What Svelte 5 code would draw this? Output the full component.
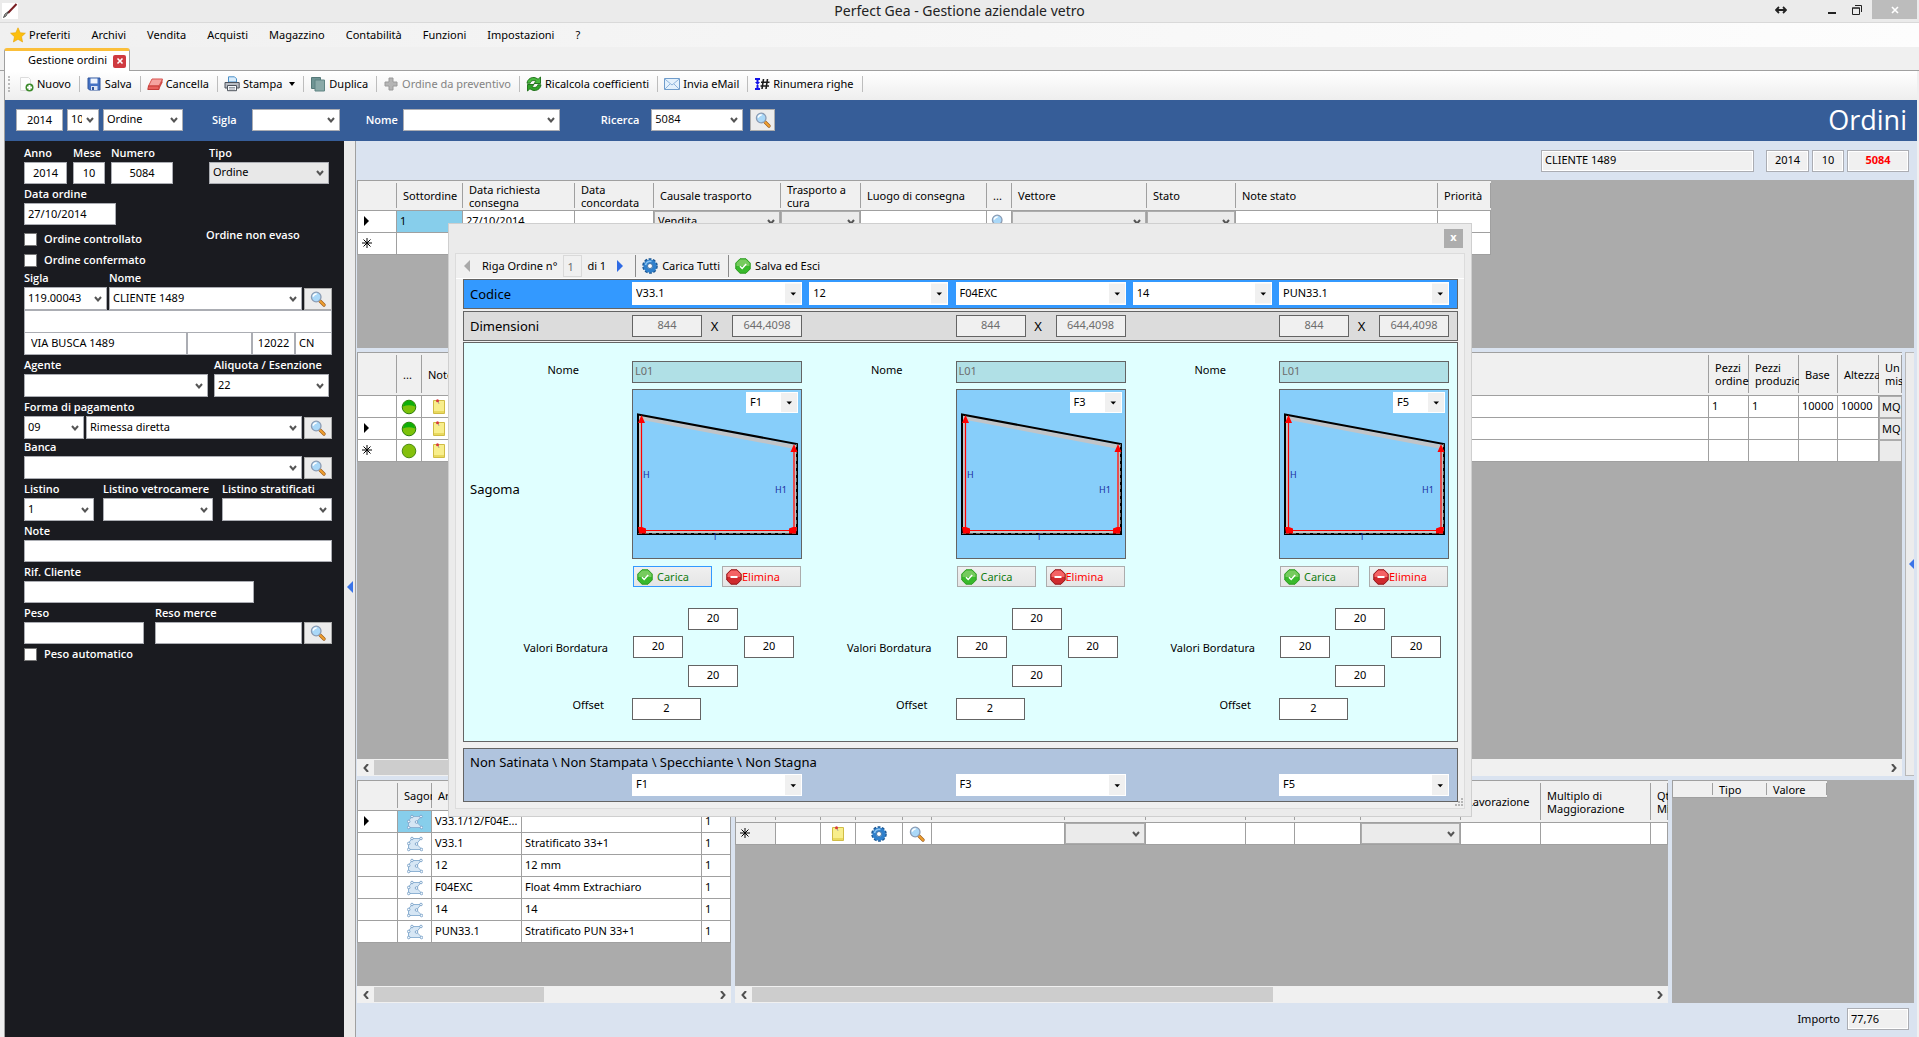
<script>
  const menus = ['Archivi', 'Vendita', 'Acquisti', 'Magazzino', 'Contabilità', 'Funzioni', 'Impostazioni', '?'];
  const tools = [
    { icon: 'new', text: 'Nuovo' },
    { icon: 'save', text: 'Salva' },
    { icon: 'erase', text: 'Cancella' },
    { icon: 'print', text: 'Stampa', drop: true },
    { icon: 'copy', text: 'Duplica' },
    { icon: 'plus', text: 'Ordine da preventivo', off: true },
    { icon: 'refresh', text: 'Ricalcola coefficienti' },
    { icon: 'mail', text: 'Invia eMail' },
    { icon: 'renumber', text: 'Rinumera righe' }
  ];
  const orderCols = [
    { w: 39, t: '' }, { w: 66, t: 'Sottordine' }, { w: 112, t: 'Data richiesta consegna' }, { w: 79, t: 'Data concordata' },
    { w: 127, t: 'Causale trasporto' }, { w: 80, t: 'Trasporto a cura' }, { w: 126, t: 'Luogo di consegna' }, { w: 25, t: '...' },
    { w: 135, t: 'Vettore' }, { w: 89, t: 'Stato' }, { w: 202, t: 'Note stato' }, { w: 53, t: 'Priorità' }
  ];
  const lineCols = [
    { w: 39, t: '' }, { w: 25, t: '...' }, { w: 35, t: 'Note' }, { w: 0, t: '' }, { w: 40, t: 'Pezzi ordine' },
    { w: 50, t: 'Pezzi produzione' }, { w: 39, t: 'Base' }, { w: 41, t: 'Altezza' }, { w: 23, t: 'Un mis' }
  ];
  const lines = [
    { mark: '', lit: true, v: ['1', '1', '10000', '10000'], um: 'MQ' },
    { mark: 'arrow', lit: true, v: ['', '', '', ''], um: 'MQ' },
    { mark: 'star', lit: false, v: ['', '', '', ''], um: '' }
  ];
  const partCols = [{ w: 40, t: '' }, { w: 34, t: 'Sagoma' }, { w: 90, t: 'Articolo' }, { w: 180, t: 'Descrizione' }, { w: 29, t: '' }];
  const parts = [
    ['V33.1/12/F04E...', ''], ['V33.1', 'Stratificato 33+1'], ['12', '12 mm'],
    ['F04EXC', 'Float 4mm Extrachiaro'], ['14', '14'], ['PUN33.1', 'Stratificato PUN 33+1']
  ];
  const workCols = [
    { w: 40, t: '' }, { w: 45, t: '' }, { w: 35, t: '' }, { w: 47, t: '' }, { w: 29, t: '' }, { w: 133, t: '' }, { w: 81, t: '' },
    { w: 100, t: '' }, { w: 49, t: '' }, { w: 66, t: '' }, { w: 100, t: '' }, { w: 80, t: 'Lavorazione' },
    { w: 110, t: 'Multiplo di Maggiorazione' }, { w: 0, t: 'Qtà Min' }
  ];
  const faces = ['F1', 'F3', 'F5'];
</script>

{#snippet icon(name)}
  <svg class="ico" viewBox="0 0 16 16" aria-hidden="true">
    {#if name === 'star'}
      <path d="M8 .8l2.200 4.900 5.200.5-3.900 3.500 1.100 5.300L8 12.300 3.400 15l1.100-5.300L.6 6.200l5.200-.5z" fill="#fcbf0e" stroke="#e8a200" stroke-width=".6" />
    {:else if name === 'new'}
      <path d="M2.500 1.500h8l2 2v11h-10z" fill="#fdfdfd" stroke="#dcdcdc" />
      <circle cx="11.500" cy="11.500" r="4" fill="#3d8b2c" />
      <path d="M11.500 9v5M9 11.500h5" stroke="#fff" stroke-width="2" />
    {:else if name === 'save'}
      <path d="M2 2h12v12H3.500L2 12.500z" fill="#4472c4" stroke="#2f549b" />
      <path d="M4.500 2.500h7v5h-7z" fill="#eef4fd" />
      <path d="M5 10h6.500v4H5z" fill="#dbe4f4" />
      <path d="M6 11h2v3H6z" fill="#2f549b" />
    {:else if name === 'erase'}
      <path d="M5 3h10.500l-3.500 7H1.500z" fill="#f5a3a0" stroke="#d9534f" />
      <path d="M1.500 10H12v3.500H.8z" fill="#e8605c" stroke="#c43c39" />
      <path d="M12 10l3.500-7v3.500L12 13.500z" fill="#cf4743" />
    {:else if name === 'print'}
      <path d="M4.500 6V.8h6l2 2V6z" fill="#d9ecfb" stroke="#4a90c8" />
      <path d="M1 6.500h14.200v5.500H1z" fill="#b9bdc4" stroke="#4d535c" />
      <path d="M3.500 9.500h9v5.200h-9z" fill="#f7f9fb" stroke="#4d535c" />
      <path d="M5 11.500h6M5 13h6" stroke="#7d8792" stroke-width=".8" />
    {:else if name === 'copy'}
      <path d="M1.500 1.500h9v11h-9z" fill="#6f9494" stroke="#557878" />
      <path d="M5 4h9.500v11H5z" fill="#8aa9a8" stroke="#5f8483" />
    {:else if name === 'plus'}
      <path d="M6 2h4v4h4v4h-4v4H6v-4H2V6h4z" fill="#b5b5b5" stroke="#9a9a9a" />
    {:else if name === 'refresh'}
      <path d="M1 7.200C1.500 3 5.500.6 9.500 1.800l2.600 1.400L14.500 1v6.500H8l2-2.200C7.500 3.800 4.800 4.600 4.200 7.200z" fill="#49b83f" stroke="#176b12" stroke-width=".9" />
      <path d="M15 8.800c-.5 4.200-4.500 6.600-8.500 5.400l-2.600-1.400L1.500 15V8.500H8l-2 2.200c2.500 1.500 5.200.7 5.800-1.900z" fill="#2fa327" stroke="#176b12" stroke-width=".9" />
    {:else if name === 'mail'}
      <path d="M.5 2.500h15v11H.5z" fill="#e4f1fc" stroke="#6f9ccb" />
      <path d="M.8 3l7.200 6 7.200-6M1 13l5-5M15 13l-5-5" fill="none" stroke="#8fb4dc" />
    {:else if name === 'renumber'}
      <path d="M1 2h5v2H4.500v2H6L3.500 9 1 6h1.500V4H1zM1 12h5v2H1zM2.500 9h2v3h-2z" fill="#1212e8" />
      <path d="M9.500 3l-1.500 10M13.500 3L12 13M7 6.300h8.500M6.500 10h8.500" stroke="#1d1d1d" stroke-width="1.600" />
    {:else if name === 'find'}
      <path d="M9.500 9.500l4.500 4.500" stroke="#9a5a1a" stroke-width="3.200" stroke-linecap="round" />
      <path d="M10 10l4 4" stroke="#f0a030" stroke-width="2" stroke-linecap="round" />
      <circle cx="6.200" cy="6" r="4.800" fill="#aad8f8" stroke="#8b9cb4" stroke-width="1.300" />
      <path d="M3.200 5.600a3 3 0 0 1 3.500-2.500" stroke="#fff" stroke-width="1.500" fill="none" />
    {:else if name === 'gear'}
      <circle cx="8" cy="8" r="6.300" fill="none" stroke="#1c5793" stroke-width="3" stroke-dasharray="2.600 1.350" />
      <circle cx="8" cy="8" r="4.600" fill="none" stroke="#2f80cc" stroke-width="4" />
      <path d="M3.500 7a4.600 4.600 0 0 1 6-3.500" fill="none" stroke="#8cc4f2" stroke-width="1.500" />
      <circle cx="8" cy="8" r="2.500" fill="#fff" stroke="#1c5793" stroke-width=".8" />
    {:else if name === 'ok'}
      <path d="M5 .8h6L15.200 5v6L11 15.200H5L.8 11V5z" fill="#39b92c" stroke="#2a9a1e" />
      <path d="M5.200 1.500h5.600L14.500 5v3h-13V5z" fill="#86cf6c" opacity=".8" />
      <path d="M5 8.200l2.200 2.300 4-4.500" fill="none" stroke="#fff" stroke-width="1.500" />
    {:else if name === 'stop'}
      <path d="M5 .8h6L15.200 5v6L11 15.200H5L.8 11V5z" fill="#cf2a2e" stroke="#8e1115" />
      <path d="M5.200 1.500h5.600L14.500 5v3h-13V5z" fill="#f7696b" opacity=".9" />
      <path d="M4.500 8h7" stroke="#fff" stroke-width="2" />
    {:else if name === 'lit'}
      <circle cx="8" cy="8" r="6.800" fill="#7cc20a" stroke="#2b7d0b" />
      <path d="M2 7.500a6 6 0 0 1 12 0q-6-2.500-12 0z" fill="#0fae0a" />
    {:else if name === 'ball'}
      <circle cx="8" cy="8" r="6.800" fill="#84c00c" stroke="#4c8a12" />
    {:else if name === 'note'}
      <path d="M2.500 1.500h11v13h-11z" fill="#f8ee8c" stroke="#d0bc45" />
      <path d="M3 12h10v2H3z" fill="#e9d95e" />
      <path d="M7 2l1 3" stroke="#999" stroke-width=".8" />
      <circle cx="6.500" cy="1.700" r="1.500" fill="#d9383c" />
    {:else if name === 'shape'}
      <path d="M5 2.500h9L9.500 8l5.500 5.500H1.500V7z" fill="#d6e6f4" stroke="#8fb3d4" />
      <g fill="#f4f9fd" stroke="#6d98c2" stroke-width=".8">
        <circle cx="5" cy="2.500" r="1.300" /><circle cx="14" cy="2.500" r="1.300" /><circle cx="9.500" cy="8" r="1.300" />
        <circle cx="14.500" cy="13.500" r="1.300" /><circle cx="1.700" cy="13.500" r="1.300" /><circle cx="1.700" cy="7.500" r="1.300" />
      </g>
    {:else if name === 'arrow'}
      <path d="M5 3l5 5-5 5z" fill="#000" />
    {:else if name === 'mark'}
      <path d="M8 3v10M3 8h10M4.500 4.500l7 7M11.500 4.500l-7 7" stroke="#000" />
    {/if}
  </svg>
{/snippet}

{#snippet combo(value, cls, label)}
  <select class="box combo {cls}" aria-label={label}><option>{value}</option></select>
{/snippet}

{#snippet cols(list)}
  <colgroup>
    {#each list as c}<col style={c.w ? `width:${c.w}px` : ''} />{/each}
  </colgroup>
{/snippet}

{#snippet head(list)}
  <thead>
    <tr>{#each list as c}<th scope="col">{c.t}</th>{/each}</tr>
  </thead>
{/snippet}

{#snippet hscroll(cls)}
  <div class="hscroll">
    <button aria-label="Scorri a sinistra"><svg viewBox="0 0 8 8"><path d="M6 0L2.500 4 6 8" /></svg></button>
    <div class="track"><div class="thumb {cls}"></div></div>
    <button aria-label="Scorri a destra"><svg viewBox="0 0 8 8"><path d="M2 0l3.500 4L2 8" /></svg></button>
  </div>
{/snippet}

<div class="app">
  <header class="titlebar">
    <svg class="brush" viewBox="0 0 16 16" aria-hidden="true">
      <path d="M0 0h16v16H0z" fill="#fff" />
      <path d="M14.500 1L6 10" stroke="#7a1f24" stroke-width="2" />
      <path d="M6.500 8.500L4 13l-2.500 1.500L3 11z" fill="#b8b8b0" stroke="#333" stroke-width=".8" />
    </svg>
    <h1>Perfect Gea - Gestione aziendale vetro</h1>
    <div class="winbtns">
      <button class="swap" aria-label="Sposta"><svg viewBox="0 0 12 8"><path d="M1 4h10M4 1L1 4l3 3M8 1l3 3-3 3" fill="none" stroke="#222" stroke-width="1.800" /></svg></button>
      <button class="min" aria-label="Riduci"><svg viewBox="0 0 10 10"><path d="M1 8h8" stroke="#222" stroke-width="2" /></svg></button>
      <button class="restore" aria-label="Ripristina"><svg viewBox="0 0 12 12"><path d="M1.500 4h7v6.500h-7zM1 4h8M4 1.500h6.500V8" fill="none" stroke="#222" /></svg></button>
      <button class="close" aria-label="Chiudi"><svg viewBox="0 0 10 10"><path d="M2 2l6 6M8 2L2 8" stroke="#fff" stroke-width="1.600" /></svg></button>
    </div>
  </header>

  <nav class="menubar">
    <button class="fav">{@render icon('star')}Preferiti</button>
    {#each menus as m}<button>{m}</button>{/each}
  </nav>

  <div class="tabs">
    <div class="tab">
      <span>Gestione ordini</span>
      <button aria-label="Chiudi scheda"><svg viewBox="0 0 10 10"><path d="M2.500 2.500l5 5M7.500 2.500l-5 5" stroke="#fff" stroke-width="1.600" /></svg></button>
    </div>
  </div>

  <div class="work">
    <div class="toolbar">
      <span class="grip"></span>
      {#each tools as t}
        <button class:drop={t.drop} disabled={t.off}>{@render icon(t.icon)}<span>{t.text}</span></button>
      {/each}
    </div>

    <div class="band">
      <input class="box mid w47" value="2014" aria-label="Anno ricerca" />
      {@render combo('10', 'w32', 'Mese ricerca')}
      {@render combo('Ordine', 'w80', 'Tipo ricerca')}
      <label class="sig">Sigla<select class="box combo w88"><option></option></select></label>
      <label class="nom">Nome<select class="box combo w157"><option></option></select></label>
      <label class="ric">Ricerca<select class="box combo w92"><option>5084</option></select></label>
      <button class="find" aria-label="Cerca">{@render icon('find')}</button>
      <h2>Ordini</h2>
    </div>

    <div class="body">
      <aside>
        <div class="row first">
          <label class="w43">Anno<input class="box mid" value="2014" /></label>
          <label class="w32">Mese<input class="box mid" value="10" /></label>
          <label class="w62">Numero<input class="box mid" value="5084" /></label>
          <label class="w120 end">Tipo<select class="box combo grey"><option>Ordine</option></select></label>
        </div>
        <div class="row"><label class="w92">Data ordine<input class="box" value="27/10/2014" /></label></div>
        <div class="state">
          <div class="ticks">
            <label class="tick"><input type="checkbox" />Ordine controllato</label>
            <label class="tick"><input type="checkbox" />Ordine confermato</label>
          </div>
          <span>Ordine non evaso</span>
        </div>
        <div class="row tight">
          <label class="w83">Sigla<select class="box combo tall"><option>119.00043</option></select></label>
          <label class="grow">Nome<select class="box combo tall"><option>CLIENTE 1489</option></select></label>
          <button class="find" aria-label="Cerca cliente">{@render icon('find')}</button>
        </div>
        <div class="address">
          <input class="box all" aria-label="Ragione sociale" />
          <input class="box street" value="VIA BUSCA 1489" aria-label="Indirizzo" />
          <input class="box" aria-label="Località" />
          <input class="box mid" value="12022" aria-label="CAP" />
          <input class="box" value="CN" aria-label="Provincia" />
        </div>
        <div class="row">
          <label class="w184">Agente<select class="box combo tall"><option></option></select></label>
          <label class="w115">Aliquota / Esenzione<select class="box combo tall"><option>22</option></select></label>
        </div>
        <div class="row tight">
          <label class="w60">Forma di pagamento<select class="box combo tall"><option>09</option></select></label>
          <label class="grow">&nbsp;<select class="box combo tall" aria-label="Descrizione pagamento"><option>Rimessa diretta</option></select></label>
          <button class="find" aria-label="Cerca pagamento">{@render icon('find')}</button>
        </div>
        <div class="row tight bank">
          <label class="grow">Banca<select class="box combo tall"><option></option></select></label>
          <button class="find" aria-label="Cerca banca">{@render icon('find')}</button>
        </div>
        <div class="row lists">
          <label class="w70">Listino<select class="box combo tall"><option>1</option></select></label>
          <label class="w110">Listino vetrocamere<select class="box combo tall"><option></option></select></label>
          <label class="w110">Listino stratificati<select class="box combo tall"><option></option></select></label>
        </div>
        <div class="row"><label class="grow">Note<input class="box" /></label></div>
        <div class="row"><label class="w230">Rif. Cliente<input class="box" /></label></div>
        <div class="row tight">
          <label class="w120 peso">Peso<input class="box" /></label>
          <label class="grow">Reso merce<input class="box" /></label>
          <button class="find" aria-label="Cerca reso">{@render icon('find')}</button>
        </div>
        <label class="tick"><input type="checkbox" />Peso automatico</label>
      </aside>

      <div class="splitter"><svg viewBox="0 0 6 12"><path d="M6 0v12L0 6z" fill="#3a74e8" /></svg></div>

      <main>
        <div class="strip">
          <input class="box ro w213" value="CLIENTE 1489" readonly aria-label="Cliente" />
          <input class="box ro mid w43" value="2014" readonly aria-label="Anno" />
          <input class="box ro mid w32" value="10" readonly aria-label="Mese" />
          <input class="box ro mid num w62" value="5084" readonly aria-label="Numero" />
        </div>

        <section class="pane orders">
          <table class="h30">
            {@render cols(orderCols)}
            {@render head(orderCols)}
            <tbody>
              <tr>
                <td class="mk">{@render icon('arrow')}</td><td class="sel">1</td><td>27/10/2014</td><td></td>
                <td class="cell">{@render combo('Vendita', 'grid', 'Causale')}</td><td class="cell">{@render combo('', 'grid', 'Trasporto')}</td>
                <td></td><td class="ic">{@render icon('find')}</td>
                <td class="cell">{@render combo('', 'grid', 'Vettore')}</td><td class="cell">{@render combo('', 'grid', 'Stato')}</td><td></td><td></td>
              </tr>
              <tr><td class="mk">{@render icon('mark')}</td>{#each orderCols.slice(1) as c}<td></td>{/each}</tr>
            </tbody>
          </table>
        </section>

        <div class="middle">
          <section class="pane">
            <table class="h43 full">
              {@render cols(lineCols)}
              {@render head(lineCols)}
              <tbody>
                {#each lines as l}
                  <tr>
                    <td class="mk">{#if l.mark}{@render icon(l.mark === 'star' ? 'mark' : 'arrow')}{/if}</td>
                    <td class="ic">{@render icon(l.lit ? 'lit' : 'ball')}</td>
                    <td class="ic">{@render icon('note')}</td>
                    <td></td>
                    {#each l.v as v}<td>{v}</td>{/each}
                    <td class="um">{l.um}</td>
                  </tr>
                {/each}
              </tbody>
            </table>
            {@render hscroll('t60')}
          </section>
          <div class="side"><svg viewBox="0 0 6 12"><path d="M6 0v12L0 6z" fill="#3a74e8" /></svg></div>
        </div>

        <div class="lower">
          <section class="pane parts">
            <table class="h30">
              {@render cols(partCols)}
              {@render head(partCols)}
              <tbody>
                {#each parts as p, i}
                  <tr>
                    <td class="mk">{#if i === 0}{@render icon('arrow')}{/if}</td>
                    <td class="ic" class:sel={i === 0}>{@render icon('shape')}</td>
                    <td>{p[0]}</td><td>{p[1]}</td><td>1</td>
                  </tr>
                {/each}
              </tbody>
            </table>
            {@render hscroll('t50')}
          </section>
          <section class="pane works">
            <table class="h42 full">
              {@render cols(workCols)}
              {@render head(workCols)}
              <tbody>
                <tr>
                  <td class="mk shade">{@render icon('mark')}</td><td></td><td class="ic">{@render icon('note')}</td>
                  <td class="ic">{@render icon('gear')}</td><td class="ic">{@render icon('find')}</td><td></td>
                  <td class="cell">{@render combo('', 'grid', 'Tipo lavorazione')}</td><td></td><td></td><td></td>
                  <td class="cell">{@render combo('', 'grid', 'Lavorazione')}</td><td></td><td></td><td></td>
                </tr>
              </tbody>
            </table>
            {@render hscroll('t58')}
          </section>
          <section class="pane values">
            <table class="h18">
              <colgroup><col class="c1" /><col class="c2" /><col class="c3" /></colgroup>
              <thead><tr><th></th><th scope="col">Tipo</th><th scope="col">Valore</th></tr></thead>
            </table>
          </section>
        </div>

        <footer><label>Importo<input class="box ro w62" value="77,76" readonly /></label></footer>
      </main>
    </div>
  </div>

  <div class="dialog" role="dialog" aria-label="Riga ordine">
    <div class="dtitle"><button aria-label="Chiudi finestra">x</button></div>
    <div class="dbody">
      <div class="dtools">
        <button class="nav" aria-label="Riga precedente"><svg viewBox="0 0 6 12"><path d="M6 0v12L0 6z" fill="#a9a9a9" /></svg></button>
        <label>Riga Ordine n°<input class="page" value="1" disabled /></label>
        <span class="of">di 1</span>
        <button class="nav" aria-label="Riga successiva"><svg viewBox="0 0 6 12"><path d="M0 0v12l6-6z" fill="#2f6be4" /></svg></button>
        <button class="act">{@render icon('gear')}Carica Tutti</button>
        <button class="act">{@render icon('ok')}Salva ed Esci</button>
      </div>

      <div class="panel code">
        <strong>Codice</strong>
        {@render combo('V33.1', 'flat', 'Codice vetro 1')}
        {@render combo('12', 'flat gapbox', 'Codice camera 1')}
        {@render combo('F04EXC', 'flat', 'Codice vetro 2')}
        {@render combo('14', 'flat gapbox', 'Codice camera 2')}
        {@render combo('PUN33.1', 'flat', 'Codice vetro 3')}
      </div>

      <div class="panel dims">
        <strong>Dimensioni</strong>
        {#each faces as f, i}
          <div class="dim" class:later={i > 0}>
            <input class="dbox off" value="844" disabled aria-label="Base {f}" />
            <span>X</span>
            <input class="dbox off" value="644,4098" disabled aria-label="Altezza {f}" />
          </div>
        {/each}
      </div>

      <div class="panel shape">
        <strong>Sagoma</strong>
        {#each faces as f, i}
          <label class="lb name k{i}" for="n{i}">Nome</label>
          <input class="dbox aqua off v{i}" id="n{i}" value="L01" disabled />
          <div class="draw v{i}">
            <svg viewBox="0 0 168 168" role="img" aria-label="Sagoma {f}">
              <path d="M7 27.500L162 57v85H7z" fill="none" stroke="#c0c4c8" stroke-width="4" />
              <path d="M5 24.500L164 54v90H5z" fill="none" stroke="#000" stroke-width="2" />
              <path d="M5 143.500h158.500V54" fill="none" stroke="#666" stroke-width="1" stroke-dasharray="4 3" />
              <path d="M8.500 28v112M161 57v83M9 140.500h152" fill="none" stroke="#f00" stroke-width="1.200" />
              <path d="M8.500 25l3.500 8H5zM161 54l3.500 8h-7zM5 137h4l4 1.500v5H6zM164 137h-4l-4 1.500v5h7z" fill="#f00" />
              <text x="10" y="88">H</text><text x="142" y="103">H1</text><text x="81" y="150">l</text>
            </svg>
            {@render combo(f, 'flat small', 'Faccia ' + f)}
          </div>
          <div class="btns v{i}">
            <button class:focus={i === 0}>{@render icon('ok')}<span class="go">Carica</span></button>
            <button>{@render icon('stop')}<span class="no">Elimina</span></button>
          </div>
          <span class="lb edge k{i}">Valori Bordatura</span>
          <div class="cross v{i}">
            {#each ['Alto', 'Sinistra', 'Destra', 'Basso'] as side}
              <input class="dbox" value="20" aria-label="{side} {f}" />
            {/each}
          </div>
          <label class="lb off-l k{i}" for="o{i}">Offset</label>
          <input class="dbox ofs v{i}" id="o{i}" value="2" />
        {/each}
      </div>

      <div class="panel side-sel">
        <strong>Non Satinata \ Non Stampata \ Specchiante \ Non Stagna</strong>
        {#each faces as f, i}
          {@render combo(f, 'flat v' + i, 'Lato ' + f)}
        {/each}
      </div>
      <svg class="sizer" viewBox="0 0 9 9" aria-hidden="true"><path d="M7 1h2M4 4h2M7 4h2M1 7h2M4 7h2M7 7h2" stroke="#b5b5b5" stroke-width="2" /></svg>
    </div>
  </div>
</div>

<style>
  :global(body) { background: #f0f0f0; }
  * { box-sizing: border-box; }
  .app {
    position: relative; display: flex; flex-direction: column; min-height: 100vh; overflow: hidden;
    font: 11px/16px "Noto Sans", "Open Sans", sans-serif; color: #000; background: #f0f0f0;
  }
  button, input, select { font: inherit; color: inherit; margin: 0; border-radius: 0; min-width: 0; }
  button { border: 0; background: none; padding: 0; }
  .ico { width: 16px; height: 16px; flex: none; display: block; }

  .box { height: 22px; width: 100%; padding: 0 3px 2px; border: 1px solid #abadb3; background: #fff; color: #000; font-weight: 400; display: block; }
  .mid { text-align: center; }
  .combo {
    appearance: none; padding-right: 16px;
    background: #fff url("data:image/svg+xml,%3Csvg xmlns='http://www.w3.org/2000/svg' viewBox='0 0 8 6'%3E%3Cpath d='M1 1l3 3.500 3-3.500' fill='none' stroke='%23555' stroke-width='2'/%3E%3C/svg%3E") no-repeat right 4px center / 8px 6px;
  }
  .tall { height: 23px; }
  .grey { background-color: #e8e8e8; }
  .flat {
    border: 1px solid #fff; height: 23px;
    background: url("data:image/svg+xml,%3Csvg xmlns='http://www.w3.org/2000/svg' viewBox='0 0 16 20'%3E%3Cpath d='M0 0h16v20H0z' fill='%23f0f0f0'/%3E%3Cpath d='M5.500 9h5.500l-2.750 3z' fill='%23000'/%3E%3C/svg%3E") no-repeat right center / 16px 21px, #fff;
  }
  .ro { background: #f0f0f0; box-shadow: inset 0 0 0 1px #fff; }
  .num { color: #f00; font-weight: 700; }
  .find { width: 28px; height: 22px; flex: none; display: grid; place-items: center; background: #ececec; border: 1px solid #acacac; }

  .w32 { width: 32px; } .w43 { width: 43px; } .w47 { width: 47px; } .w60 { width: 60px; } .w62 { width: 62px; }
  .w70 { width: 70px; } .w80 { width: 80px; } .w83 { width: 83px; } .w88 { width: 88px; } .w92 { width: 92px; }
  .w110 { width: 110px; } .w115 { width: 115px; } .w120 { width: 120px; } .w157 { width: 157px; } .w184 { width: 184px; }
  .w213 { width: 213px; } .w230 { width: 230px; }
  .grow { flex: 1; }

  .titlebar { display: flex; align-items: center; height: 23px; background: #ebebeb; border-bottom: 1px solid #d9d9d9; padding-left: 2px; }
  .brush { width: 16px; height: 16px; }
  .titlebar h1 { flex: 1; text-align: center; font-size: 14px; font-weight: 400; line-height: 22px; margin: 0 0 0 126px; color: #222; }
  .winbtns { display: flex; width: 142px; align-self: flex-start; align-items: center; margin-right: 2px; }
  .winbtns svg { display: block; }
  .swap svg { width: 12px; height: 8px; }
  .swap { margin-right: 40px; }
  .min { margin-right: 14px; }
  .min svg, .close svg { width: 10px; height: 10px; }
  .restore svg { width: 12px; height: 12px; }
  .close { margin-left: auto; width: 45px; height: 19px; background: #bcbcbc; display: grid; place-items: center; }

  .menubar { display: flex; gap: 21px; height: 24px; align-items: center; padding-left: 10px; background: linear-gradient(90deg, #f0f0f0, #fdfdfd); }
  .fav { display: flex; gap: 3px; }
  .tabs { height: 24px; padding-left: 4px; border-bottom: 1px solid #a0a0a0; display: flex; align-items: flex-end; }
  .tab { display: flex; align-items: center; justify-content: space-between; width: 126px; height: 23px; padding: 0 3px 0 23px; margin-bottom: -1px; background: #fff; border: 1px solid #a0a0a0; border-top: 3px solid #fbbf3a; border-bottom: 0; border-radius: 3px 3px 0 0; }
  .tab span { padding-bottom: 3px; }
  .tab button { width: 13px; height: 13px; background: #cf3a40; border-radius: 2px; display: grid; place-items: center; }
  .tab svg { width: 10px; height: 10px; }

  .work { flex: 1; display: flex; flex-direction: column; margin: 0 2px 0 4px; border-left: 1px solid #a0a0a0; }
  .toolbar { display: flex; align-items: center; height: 29px; background: linear-gradient(#fff, #eee); padding: 0 0 4px 3px; }
  .grip { width: 2px; height: 16px; margin-right: 2px; border-left: 2px dotted #bbb; }
  .toolbar button { display: flex; align-items: center; gap: 3px; padding: 0 8px 0 6px; border-right: 1px solid #bdbdbd; }
  .toolbar button:disabled { color: #838383; }
  .drop::after { content: ""; border: 3px solid transparent; border-top: 4px solid #000; border-bottom: 0; margin-left: 4px; }

  .band { display: flex; align-items: center; height: 41px; padding: 0 10px 1px 11px; background: #365d98; color: #fff; font-weight: 600; gap: 4px; }
  .band label { display: flex; align-items: center; font-family: "Open Sans", sans-serif; }
  .sig { gap: 15px; margin-left: 25px; }
  .nom { gap: 5px; margin-left: 22px; }
  .ric { gap: 12px; margin-left: 37px; }
  .band .find { width: 25px; margin-left: 3px; }
  .band h2 { margin: 0 0 0 auto; font-size: 27px; font-weight: 400; line-height: 38px; font-family: "Open Sans", sans-serif; }

  .body { flex: 1; display: grid; grid-template-columns: 339px 12px minmax(0, 1fr); }
  aside { background: #1a1b20; color: #fff; padding: 4px 12px 0 19px; display: flex; flex-direction: column; gap: 2px; font-weight: 600; font-family: "Open Sans", sans-serif; }
  .row { display: flex; align-items: flex-end; gap: 6px; }
  .row label { display: block; white-space: nowrap; }
  .row .box { margin-top: 1px; font-family: "Noto Sans", sans-serif; }
  .row .find { align-self: flex-end; }
  .end { margin-left: auto; margin-right: 3px; }
  .tight { gap: 2px; }
  .bank { margin-top: -2px; }
  .peso { margin-right: 9px; }
  .lists { justify-content: space-between; }
  .tick { display: flex; align-items: center; gap: 7px; }
  .tick input { appearance: none; width: 13px; height: 13px; background: #fff; border: 1px solid #777; }
  .state { display: flex; padding-top: 4px; }
  .ticks { width: 182px; display: flex; flex-direction: column; gap: 5px; }
  .state span { line-height: 8px; }
  .address { display: grid; grid-template-columns: 163px 65px 43px 1fr; margin: -2px 0 1px; }
  .address .all { grid-column: 1 / -1; }
  .address .box { margin-bottom: -1px; font-family: "Noto Sans", sans-serif; height: 23px; }
  .address .street { padding-left: 6px; }

  .splitter { display: grid; place-items: center; background: #ebebeb; border-right: 1px solid #a0a0a0; }
  .splitter svg { width: 6px; height: 12px; margin-bottom: 4px; }

  main { display: flex; flex-direction: column; gap: 4px; background: #dae3f0; padding: 0 3px 0 1px; min-width: 0; }
  .strip { display: flex; gap: 3px; justify-content: flex-end; align-items: center; height: 35px; padding: 4px 5px 0 0; }
  .strip .w213 { margin-right: 9px; }
  .pane { background: #ababab; overflow: hidden; display: flex; flex-direction: column; align-items: flex-start; min-width: 0; }
  .orders { height: 168px; }
  .middle { flex: 1; display: flex; gap: 3px; min-height: 424px; }
  .middle .pane { flex: 1; }
  .side { width: 9px; background: #ececec; border: 1px solid #b8b8b8; border-right: 0; display: flex; align-items: center; justify-content: flex-end; }
  .side svg { width: 5px; height: 10px; }
  .lower { display: grid; grid-template-columns: 374px minmax(0, 1fr) 242px; gap: 4px; height: 223px; }

  table { table-layout: fixed; width: 1px; border-spacing: 0; border-top: 1px solid #a0a0a0; border-left: 1px solid #a0a0a0; }
  table.full { width: 100%; }
  th { background: linear-gradient(#a0a0a0, #a0a0a0) no-repeat right center / 1px calc(100% - 4px), #f0f0f0; border-bottom: 1px solid #a0a0a0; font-weight: 400; text-align: left; padding: 0 4px 0 6px; line-height: 13px; overflow: hidden; }
  .h30 th { height: 30px; } .h42 th { height: 42px; } .h43 th { height: 43px; } .h18 th { height: 17px; }
  td { height: 22px; background: #fff; border: 0 solid #a0a0a0; border-width: 0 1px 1px 0; padding: 0 3px 1px; white-space: nowrap; overflow: hidden; line-height: 16px; }
  .mk .ico { margin-left: -2px; }
  .ic { padding: 0; }
  .ic .ico { margin: 0 auto; }
  .cell { padding: 0; }
  .sel { background: #87ceeb; }
  .shade { background: #f0f0f0; }
  .um { background: #ebebeb; border: 1px solid #acacac; padding: 0 2px; }
  .grid { height: 21px; background-color: #ebebeb; border: 1px solid #acacac; }
  .c1 { width: 40px; } .c2 { width: 54px; } .c3 { width: 60px; }

  .hscroll { display: flex; width: 100%; height: 17px; margin-top: auto; background: #f0f0f0; }
  .hscroll button { width: 17px; display: grid; place-items: center; }
  .hscroll svg { width: 8px; height: 8px; fill: none; stroke: #505050; stroke-width: 2; }
  .track { flex: 1; padding: 1px 0; }
  .thumb { height: 15px; background: #cdcdcd; }
  .t60 { width: 60%; } .t50 { width: 50%; } .t58 { width: 58%; }

  footer { display: flex; justify-content: flex-end; padding: 1px 5px 7px 0; }
  footer label { display: flex; align-items: center; gap: 7px; }

  .dialog { position: absolute; left: 448px; top: 223px; width: 1024px; background: #ebebeb; border: 1px solid #cfcfcf; padding: 0 6px 7px; }
  .dtitle { height: 29px; display: flex; justify-content: flex-end; padding: 5px 2px 0; }
  .dtitle button { width: 19px; height: 19px; background: #adadad; color: #fff; font-weight: 700; line-height: 16px; padding-bottom: 3px; }
  .dbody { position: relative; background: #f0f0f0; border: 1px solid #dcdcdc; padding: 0 6px 6px 7px; display: flex; flex-direction: column; }
  .dtools { display: flex; align-items: center; height: 25px; border-bottom: 1px solid #fff; margin: 0 -6px 0 -7px; padding-left: 8px; }
  .dtools label { display: flex; align-items: center; gap: 6px; margin-left: 12px; }
  .page { width: 19px; height: 22px; border: 1px solid #d9d9d9; background: #f0f0f0; color: #6d6d6d; padding: 0 3px; }
  .of { margin: 0 11px 0 5px; }
  .nav svg { width: 6px; height: 12px; display: block; }
  .act { display: flex; align-items: center; gap: 4px; height: 22px; border-left: 1px solid #8a8a8a; padding-left: 6px; margin-right: 8px; }
  .nav + .act { margin-left: 12px; }

  .panel { border: 1px solid #646464; display: grid; grid-template-columns: 168px 170px minmax(0, 1fr) 170px minmax(0, 1fr) 170px 8px; }
  .panel strong { font-size: 13px; font-weight: 400; padding-left: 6px; white-space: nowrap; line-height: 20px; }
  .code { background: #39f; height: 30px; align-items: start; padding-top: 2px; }
  .code strong { line-height: 25px; }
  .gapbox { width: 139px; justify-self: center; }
  .dims { background: #dcdcdc; height: 30px; margin-top: 2px; align-items: center; }
  .dim { display: flex; justify-content: space-between; align-items: center; }
  .dim span { font-size: 13px; padding-right: 5px; }
  .dim.later { grid-column: span 2; padding-left: calc(100% - 170px); }
  .dbox { width: 50px; height: 22px; border: 1px solid #646464; background: #fff; text-align: center; padding: 0 2px 4px; }
  .dim .dbox { width: 70px; }
  .dbox.off { color: #6d6d6d; background: #f0f0f0; }
  .dbox.aqua { width: 100%; background: #b0e0e6; text-align: left; }

  .shape { background: #e0ffff; margin-top: 1px; padding: 18px 0 21px; grid-template-rows: 28px 177px 42px 90px 22px; }
  .shape strong { grid-column: 1; grid-row: 2; align-self: center; padding-top: 22px; }
  .k0 { grid-column: 1; } .v0 { grid-column: 2; }
  .k1 { grid-column: 3; } .v1 { grid-column: 4; }
  .k2 { grid-column: 5; } .v2 { grid-column: 6; }
  .lb { justify-self: end; align-self: center; }
  .name { grid-row: 1; padding-right: 53px; align-self: start; line-height: 18px; }
  .aqua { grid-row: 1; }
  .draw { grid-row: 2; position: relative; height: 170px; background: #87cefa; border: 1px solid #646464; }
  .draw svg { display: block; width: 168px; height: 168px; }
  .draw text { font-size: 9px; fill: #1c2f9c; }
  .small { position: absolute; right: 3px; top: 2px; width: 52px; height: 21px; }
  .btns { grid-row: 3; display: flex; justify-content: space-between; padding: 0 1px; }
  .btns button { width: 79px; height: 21px; display: flex; align-items: center; padding-left: 3px; background: linear-gradient(#f0f0f0, #e5e5e5); border: 1px solid #acacac; }
  .btns .focus { border-color: #39f; }
  .go { color: #107c10; margin-left: 4px; }
  .no { color: #f00; }
  .edge { grid-row: 4; padding-right: 24px; align-self: start; line-height: 80px; }
  .cross { grid-row: 4; display: grid; grid-template-columns: 55px 56px 50px; grid-template-rows: 28px 29px 22px; padding-left: 1px; }
  .cross .dbox:nth-child(1) { grid-area: 1 / 2; }
  .cross .dbox:nth-child(2) { grid-area: 2 / 1; }
  .cross .dbox:nth-child(3) { grid-area: 2 / 3; }
  .cross .dbox:nth-child(4) { grid-area: 3 / 2; }
  .off-l { grid-row: 5; padding-right: 28px; line-height: 14px; align-self: start; }
  .ofs { grid-row: 5; width: 69px; }
  .side-sel { background: #b0c4de; margin-top: 6px; padding: 3px 0 5px; row-gap: 2px; }
  .side-sel strong { grid-column: 1 / -1; }
  .side-sel .flat { grid-row: 2; height: 22px; }
  .sizer { position: absolute; right: 1px; bottom: 1px; width: 9px; height: 9px; }
</style>
